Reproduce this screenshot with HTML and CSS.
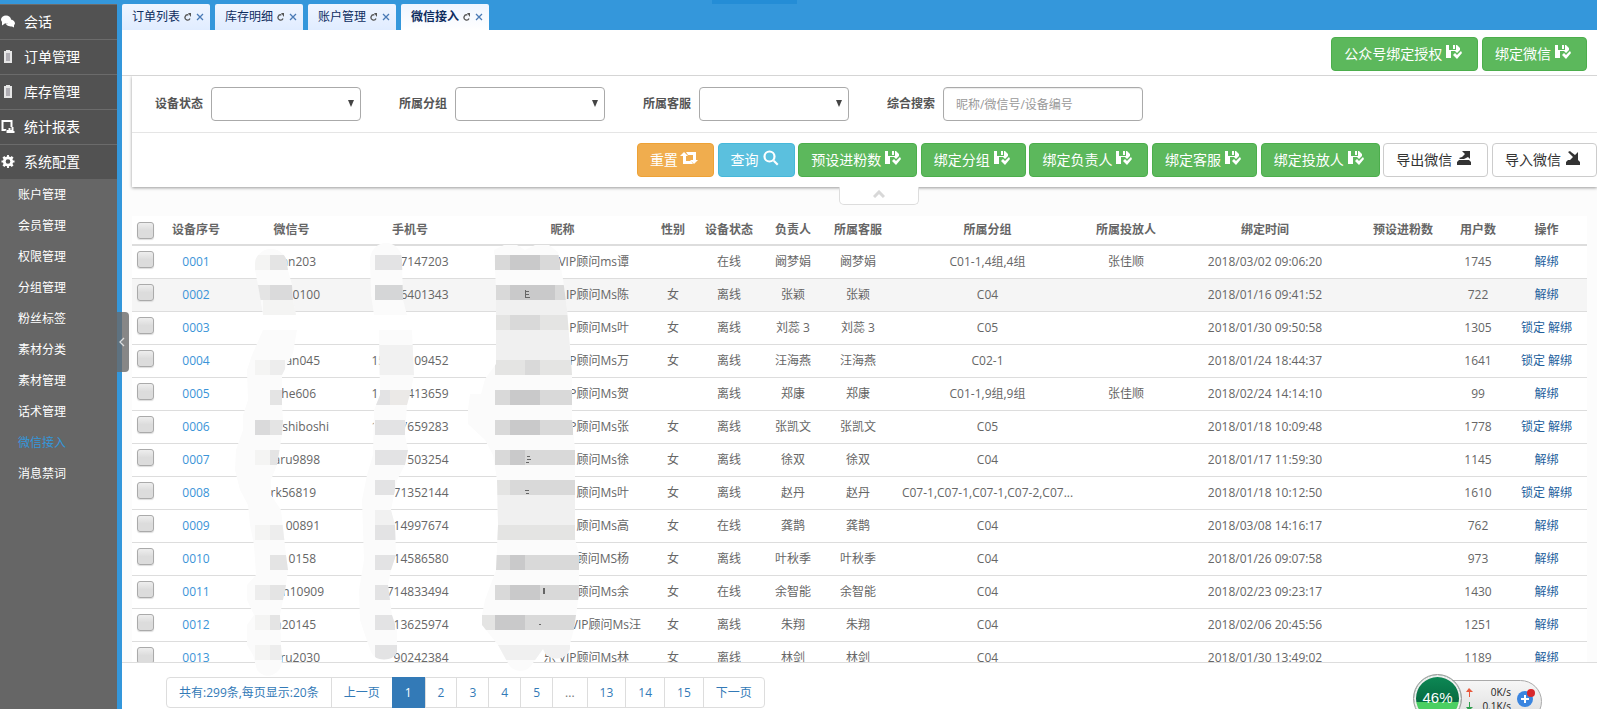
FILE: index.html
```html
<!DOCTYPE html>
<html lang="zh-CN">
<head>
<meta charset="utf-8">
<title>微信接入</title>
<link rel="stylesheet" href="styles.css">
</head>
<body>
<svg class="sprite" aria-hidden="true">
  <symbol id="i-saved" viewBox="0 0 16 16"><path d="M0 1h3v5h7V1h1l3 3v2l-3 3-2-2H5v7H0zM7 1h2v4H7zM7 11l2-2 2 2 4-4 1 2-5 6z"/></symbol>
  <symbol id="i-retweet" viewBox="0 0 18 14"><path d="M4 1l4 4H6v5h5l2 3H3V5H0zM6 1h10v8h2l-4 4-4-4h3V4H8z"/></symbol>
  <symbol id="i-search" viewBox="0 0 16 16"><circle cx="6.5" cy="6.500" r="5" fill="none" stroke="currentColor" stroke-width="2.200"/><path d="M10 11.500l1.500-1.500 4 4-1.500 1.500z"/></symbol>
  <symbol id="i-export" viewBox="0 0 16 16"><path d="M3 10h10l2 2v3H1v-3zM6 1h8v8l-2-2-4 2H4l-1-1 3-1 3-3z"/></symbol>
  <symbol id="i-import" viewBox="0 0 16 16"><path d="M3 10h10l2 2v3H1v-3zM3 2l2-1 1 1 4 3 3-3v8H5l3-3z"/></symbol>
  <symbol id="i-chat" viewBox="0 0 14 12"><ellipse cx="5" cy="4" rx="5" ry="4"/><path d="M1 6v4l3-2zM9 4c3 0 5 2 5 4l-1 2v2l-2-1c-3 0-6-1-6-3 3 0 4-2 4-4z"/></symbol>
  <symbol id="i-clip" viewBox="0 0 14 13"><path d="M5 0h4v1h2v12H3V1h2z" fill="#e6e6e6"/><path d="M5 3h4v8H5z" fill="#b0aeb4"/></symbol>
  <symbol id="i-chart" viewBox="0 0 13 13"><path d="M0 0h11v7H9V2H2v7h3l-1 2H0z"/><path d="M5 13v-3h2V8h2v2h1V7h2v4h1v2z"/></symbol>
  <symbol id="i-gear" viewBox="0 0 14 14"><circle cx="7" cy="7" r="4" fill="none" stroke="currentColor" stroke-width="3"/><path d="M6 0h2v3H6zM6 11h2v3H6zM0 6h3v2H0zM11 6h3v2h-3zM1 3l2-2 2 2-2 2zM9 3l2-2 2 2-2 2zM1 11l2-2 2 2-2 2zM9 11l2-2 2 2-2 2z"/></symbol>
  <symbol id="i-reload" viewBox="0 0 8 8"><path d="M6 5.500A2.600 2.600 0 1 1 4.500 2" fill="none" stroke="#555" stroke-width="1.300"/><path d="M4 0h3v4z" fill="#555"/></symbol>
  <symbol id="i-close" viewBox="0 0 8 8"><path d="M1 1l6 6M7 1L1 7" fill="none" stroke="#4a7ab5" stroke-width="1.300"/></symbol>
</svg>
<div class="loader"></div>

<nav class="sidebar">
  <a class="nav-main" href="#"><svg class="nav-icon"><use href="#i-chat"/></svg>会话</a>
  <a class="nav-main" href="#"><svg class="nav-icon"><use href="#i-clip"/></svg>订单管理</a>
  <a class="nav-main" href="#"><svg class="nav-icon"><use href="#i-clip"/></svg>库存管理</a>
  <a class="nav-main" href="#"><svg class="nav-icon"><use href="#i-chart"/></svg>统计报表</a>
  <a class="nav-main" href="#"><svg class="nav-icon"><use href="#i-gear"/></svg>系统配置</a>
  <a class="nav-sub" href="#">账户管理</a>
  <a class="nav-sub" href="#">会员管理</a>
  <a class="nav-sub" href="#">权限管理</a>
  <a class="nav-sub" href="#">分组管理</a>
  <a class="nav-sub" href="#">粉丝标签</a>
  <a class="nav-sub" href="#">素材分类</a>
  <a class="nav-sub" href="#">素材管理</a>
  <a class="nav-sub" href="#">话术管理</a>
  <a class="nav-sub current" href="#">微信接入</a>
  <a class="nav-sub" href="#">消息禁词</a>
</nav>
<button class="side-toggle" type="button" aria-label="收起菜单"><svg viewBox="0 0 6 10"><path d="M5 1L1 5l4 4" fill="none" stroke="#ddd" stroke-width="1.300"/></svg></button>

<div class="workspace">
  <div class="tabs">
    <a class="tab" href="#">订单列表<svg><use href="#i-reload"/></svg><svg><use href="#i-close"/></svg></a>
    <a class="tab" href="#">库存明细<svg><use href="#i-reload"/></svg><svg><use href="#i-close"/></svg></a>
    <a class="tab" href="#">账户管理<svg><use href="#i-reload"/></svg><svg><use href="#i-close"/></svg></a>
    <a class="tab active" href="#">微信接入<svg><use href="#i-reload"/></svg><svg><use href="#i-close"/></svg></a>
  </div>

  <main class="page">
    <header class="page-head">
      <button class="btn green" type="button">公众号绑定授权<svg><use href="#i-saved"/></svg></button>
      <button class="btn green" type="button">绑定微信<svg><use href="#i-saved"/></svg></button>
    </header>

    <div class="scroll">
      <form class="panel">
        <div class="filters">
          <div class="field"><label for="f1">设备状态</label><span class="pick"><select id="f1"><option></option></select></span></div>
          <div class="field"><label for="f2">所属分组</label><span class="pick"><select id="f2"><option></option></select></span></div>
          <div class="field"><label for="f3">所属客服</label><span class="pick"><select id="f3"><option></option></select></span></div>
          <div class="field"><label for="f4">综合搜索</label><input id="f4" type="text" placeholder="昵称/微信号/设备编号"></div>
        </div>
        <div class="actions">
          <button class="btn orange" type="button">重置<svg><use href="#i-retweet"/></svg></button>
          <button class="btn cyan" type="button">查询<svg><use href="#i-search"/></svg></button>
          <button class="btn green" type="button">预设进粉数<svg><use href="#i-saved"/></svg></button>
          <button class="btn green" type="button">绑定分组<svg><use href="#i-saved"/></svg></button>
          <button class="btn green" type="button">绑定负责人<svg><use href="#i-saved"/></svg></button>
          <button class="btn green" type="button">绑定客服<svg><use href="#i-saved"/></svg></button>
          <button class="btn green" type="button">绑定投放人<svg><use href="#i-saved"/></svg></button>
          <button class="btn plain" type="button">导出微信<svg><use href="#i-export"/></svg></button>
          <button class="btn plain" type="button">导入微信<svg><use href="#i-import"/></svg></button>
        </div>
        <button class="fold" type="button" aria-label="收起筛选"><svg viewBox="0 0 12 8"><path d="M1 7l5-5 5 5" fill="none" stroke="#d8d8d8" stroke-width="3"/></svg></button>
      </form>

      <table class="grid">
        <colgroup><col class="c-check"><col class="c-no"><col class="c-wx"><col class="c-tel"><col class="c-nick"><col class="c-sex"><col class="c-state"><col class="c-owner"><col class="c-service"><col class="c-group"><col class="c-put"><col class="c-time"><col class="c-preset"><col class="c-users"><col class="c-ops"></colgroup>
        <thead><tr><th><input type="checkbox" aria-label="全选"></th><th>设备序号</th><th>微信号</th><th>手机号</th><th>昵称</th><th>性别</th><th>设备状态</th><th>负责人</th><th>所属客服</th><th>所属分组</th><th>所属投放人</th><th>绑定时间</th><th>预设进粉数</th><th>用户数</th><th>操作</th></tr></thead>
        <tbody>
        <tr><td><input type="checkbox" aria-label="0001"></td><td><a href="#">0001</a></td><td><span class="wx s">nn203</span></td><td><span class="tel">7147203</span></td><td><span class="nick">VIP顾问ms谭</span></td><td></td><td>在线</td><td>阚梦娟</td><td>阚梦娟</td><td>C01-1,4组,4组</td><td>张佳顺</td><td>2018/03/02 09:06:20</td><td></td><td>1745</td><td><a class="op" href="#">解绑</a></td></tr>
        <tr class="hover"><td><input type="checkbox" aria-label="0002"></td><td><a href="#">0002</a></td><td><span class="wx m">0100</span></td><td><span class="tel">6401343</span></td><td><span class="nick">IP顾问Ms陈</span></td><td>女</td><td>离线</td><td>张颖</td><td>张颖</td><td>C04</td><td></td><td>2018/01/16 09:41:52</td><td></td><td>722</td><td><a class="op" href="#">解绑</a></td></tr>
        <tr><td><input type="checkbox" aria-label="0003"></td><td><a href="#">0003</a></td><td></td><td></td><td><span class="nick">P顾问Ms叶</span></td><td>女</td><td>离线</td><td>刘蕊 3</td><td>刘蕊 3</td><td>C05</td><td></td><td>2018/01/30 09:50:58</td><td></td><td>1305</td><td><a class="op" href="#">锁定</a> <a class="op" href="#">解绑</a></td></tr>
        <tr><td><input type="checkbox" aria-label="0004"></td><td><a href="#">0004</a></td><td><span class="wx m">an045</span></td><td><span class="tel"><span>15</span><span>09452</span></span></td><td><span class="nick">P顾问Ms万</span></td><td>女</td><td>离线</td><td>汪海燕</td><td>汪海燕</td><td>C02-1</td><td></td><td>2018/01/24 18:44:37</td><td></td><td>1641</td><td><a class="op" href="#">锁定</a> <a class="op" href="#">解绑</a></td></tr>
        <tr><td><input type="checkbox" aria-label="0005"></td><td><a href="#">0005</a></td><td><span class="wx s">he606</span></td><td><span class="tel"><span>1</span><span>413659</span></span></td><td><span class="nick">P顾问Ms贺</span></td><td></td><td>离线</td><td>郑康</td><td>郑康</td><td>C01-1,9组,9组</td><td>张佳顺</td><td>2018/02/24 14:14:10</td><td></td><td>99</td><td><a class="op" href="#">解绑</a></td></tr>
        <tr><td><input type="checkbox" aria-label="0006"></td><td><a href="#">0006</a></td><td><span class="wx xl">shiboshi</span></td><td><span class="tel"><span>1</span><span>7659283</span></span></td><td><span class="nick">P顾问Ms张</span></td><td>女</td><td>离线</td><td>张凯文</td><td>张凯文</td><td>C05</td><td></td><td>2018/01/18 10:09:48</td><td></td><td>1778</td><td><a class="op" href="#">锁定</a> <a class="op" href="#">解绑</a></td></tr>
        <tr><td><input type="checkbox" aria-label="0007"></td><td><a href="#">0007</a></td><td><span class="wx m">aru9898</span></td><td><span class="tel">503254</span></td><td><span class="nick">顾问Ms徐</span></td><td>女</td><td>离线</td><td>徐双</td><td>徐双</td><td>C04</td><td></td><td>2018/01/17 11:59:30</td><td></td><td>1145</td><td><a class="op" href="#">解绑</a></td></tr>
        <tr><td><input type="checkbox" aria-label="0008"></td><td><a href="#">0008</a></td><td><span class="wx s">rk56819</span></td><td><span class="tel">71352144</span></td><td><span class="nick">顾问Ms叶</span></td><td>女</td><td>离线</td><td>赵丹</td><td>赵丹</td><td>C07-1,C07-1,C07-1,C07-2,C07...</td><td></td><td>2018/01/18 10:12:50</td><td></td><td>1610</td><td><a class="op" href="#">锁定</a> <a class="op" href="#">解绑</a></td></tr>
        <tr><td><input type="checkbox" aria-label="0009"></td><td><a href="#">0009</a></td><td><span class="wx m">00891</span></td><td><span class="tel">14997674</span></td><td><span class="nick">顾问Ms高</span></td><td>女</td><td>在线</td><td>龚鹊</td><td>龚鹊</td><td>C04</td><td></td><td>2018/03/08 14:16:17</td><td></td><td>762</td><td><a class="op" href="#">解绑</a></td></tr>
        <tr><td><input type="checkbox" aria-label="0010"></td><td><a href="#">0010</a></td><td><span class="wx s">0158</span></td><td><span class="tel">14586580</span></td><td><span class="nick">顾问MS杨</span></td><td>女</td><td>离线</td><td>叶秋季</td><td>叶秋季</td><td>C04</td><td></td><td>2018/01/26 09:07:58</td><td></td><td>973</td><td><a class="op" href="#">解绑</a></td></tr>
        <tr><td><input type="checkbox" aria-label="0011"></td><td><a href="#">0011</a></td><td><span class="wx l">n10909</span></td><td><span class="tel">714833494</span></td><td><span class="nick">顾问Ms余</span></td><td>女</td><td>在线</td><td>余智能</td><td>余智能</td><td>C04</td><td></td><td>2018/02/23 09:23:17</td><td></td><td>1430</td><td><a class="op" href="#">解绑</a></td></tr>
        <tr><td><input type="checkbox" aria-label="0012"></td><td><a href="#">0012</a></td><td><span class="wx s">n20145</span></td><td><span class="tel">13625974</span></td><td><span class="nick wide">VIP顾问Ms汪</span></td><td>女</td><td>离线</td><td>朱翔</td><td>朱翔</td><td>C04</td><td></td><td>2018/02/06 20:45:56</td><td></td><td>1251</td><td><a class="op" href="#">解绑</a></td></tr>
        <tr><td><input type="checkbox" aria-label="0013"></td><td><a href="#">0013</a></td><td><span class="wx m">ru2030</span></td><td><span class="tel">90242384</span></td><td><span class="nick">乐 VIP顾问Ms林</span></td><td>女</td><td>离线</td><td>林剑</td><td>林剑</td><td>C04</td><td></td><td>2018/01/30 13:49:02</td><td></td><td>1189</td><td><a class="op" href="#">解绑</a></td></tr>
        </tbody>
      </table>
    </div>

    <footer class="page-foot">
      <ul class="pager">
        <li><a href="#">共有:299条,每页显示:20条</a></li><li><a href="#">上一页</a></li><li><a class="on" href="#">1</a></li><li><a href="#">2</a></li><li><a href="#">3</a></li><li><a href="#">4</a></li><li><a href="#">5</a></li><li><a class="dots" href="#">...</a></li><li><a href="#">13</a></li><li><a href="#">14</a></li><li><a href="#">15</a></li><li><a href="#">下一页</a></li>
      </ul>
    </footer>

    <!-- privacy mosaic over account, phone and nickname columns -->
    <svg class="mosaic" viewBox="235 240 350 440" shape-rendering="crispEdges" aria-hidden="true">
      <clipPath id="m1"><path d="M255 264a16 15 0 0 1 32 0l1 6 4 15 1 15 3 15h-33l-4-24-4-21zM263 330h34l-4 23-11 22v30l1 15-1 15-5 30-6 15v15l10 15 5 45 2 15-2 15-3 15-3 15 1 30 1 15a14 15 0 0 1-25 10l-4-15-6-10v-20l7-10-7-15v-15l9-10-2-30-4-20-2-20-8-15-5-20 1-20 7-20v-15l5-15-1-30 5-15z"/></clipPath>
      <g clip-path="url(#m1)"><path fill="#fbfbfb" d="M235 240h65v75h-65zM235 330h65v350h-65z"/>
        <path fill="#f4f4f3" d="M255 255h15v15h-15zM263 300h35v15h-35zM255 360h15v15h-15zM255 450h15v15h-15zM255 525h15v15h-15zM255 615h15v15h-15zM255 645h15v15h-15z"/>
        <path fill="#e4e4e4" d="M270 255h20v15h-20zM255 285h15v15h-15zM270 390h15v15h-15zM270 420h15v15h-15zM270 450h15v15h-15zM270 555h20v15h-20zM270 585h20v15h-20zM270 615h15v15h-15z"/>
        <path fill="#ededed" d="M270 360h15v15h-15zM270 525h15v15h-15zM255 585h15v15h-15zM270 645h15v15h-15z"/>
        <path fill="#dadadb" d="M270 285h25v15h-25zM255 420h15v15h-15z"/></g>
      <clipPath id="m2"><path d="M370 260a16 17 0 0 1 32 0l1 40 4 15h-33l-3-20zM379 330h33l2 45-3 15-4 15-2 30 3 15-3 15-8 15-6 30 4 15 1 30-5 15-3 15 2 15 2 15 5 15v22a14 12 0 0 1-26 0l-6-17-5-15-1-30 5-30-2-60 5-25 6-20 1-45 6-15z"/></clipPath>
      <g clip-path="url(#m2)"><path fill="#fbfbfb" d="M350 240h65v75h-65zM350 330h65v350h-65z"/>
        <path fill="#f1f1f1" d="M375 345h40v30h-40zM375 510h20v15h-20z"/>
        <path fill="#e3e3e4" d="M375 255h30v15h-30zM375 390h15v15h-15zM375 420h30v15h-30zM375 450h35v15h-35zM375 480h20v15h-20zM375 525h22v15h-22zM375 555h20v15h-20zM375 585h20v15h-20zM375 615h20v15h-20zM375 645h25v15h-25z"/>
        <path fill="#ebe9e7" d="M390 390h25v15h-25z"/><path fill="#d5d6d7" d="M375 285h30v15h-30z"/></g>
      <clipPath id="m3"><path d="M494 250l10-5h13l8 5 10-5h14l9 7 5 27 4 30 5 65v45l3 30v90l4 15v40l-5 35-4 15v5a14 13 0 0 1-27 0l-10 14a14 14 0 0 1-24 2l-11-20-16-20v-10l3-15 11-30 2-45-1-45-4-25-8-15-17-16v-15l2-15h11l4-15 11-15v-75z"/></clipPath>
      <g clip-path="url(#m3)"><path fill="#fbfbfb" d="M465 240h120v440H465z"/>
        <path fill="#f0f0f0" d="M495 300h78v15h-78zM495 330h78v30h-78zM495 495h84v30h-84zM495 645h84v15h-84z"/>
        <path fill="#e4e4e3" d="M495 315h78v15h-78zM495 360h78v15h-78zM495 480h15v15h-15zM495 525h84v15h-84zM480 615h15v15h-15z"/>
        <path fill="#d9d9d9" d="M495 255h65v15h-65zM495 285h75v15h-75zM510 315h30v15h-30zM525 360h15v15h-15zM495 390h78v15h-78zM495 420h78v15h-78zM495 450h84v15h-84zM510 480h70v15h-70zM495 555h84v15h-84zM495 585h84v15h-84zM495 615h84v15h-84z"/>
        <path fill="#c9c9ca" d="M510 255h30v15h-30zM510 285h45v15h-45zM510 390h30v15h-30zM510 420h30v15h-30zM510 450h15v15h-15zM510 555h15v15h-15zM510 585h30v15h-30zM495 615h30v15h-30z"/></g>
      <path fill="#666" d="M525 290h1v8h-1zM526 291h3v1h-3zM526 294h3v1h-3zM526 297h4v1h-4zM527 456h3v1h-3zM527 459h4v1h-4zM526 462h3v1h-3zM525 490h4v1h-4zM526 493h3v1h-3zM543 588h2v6h-2zM539 624h2v1h-2z"/>
    </svg>
  </main>
</div>

<aside class="meter">
  <div class="speed">
    <svg viewBox="0 0 7 9"><path d="M3 0l4 4H4v5H3V4H0z" fill="#e8583c"/></svg><span>0K/s</span>
    <svg viewBox="0 0 7 9"><path d="M3 9l4-4H4V0H3v5H0z" fill="#2f9e4d"/></svg><span>0.1K/s</span>
  </div>
  <svg class="plus" viewBox="0 0 20 20"><circle cx="9" cy="11" r="8" fill="#3a85e0"/><path d="M9 7v8M5 11h8" stroke="#fff" stroke-width="2"/><circle cx="15" cy="5" r="4" fill="#d8282c"/></svg>
  <div class="ball">46%</div>
</aside>
</body>
</html>
```
FILE: styles.css
```css
* { box-sizing: border-box; }
body {
  margin: 0;
  height: 100vh;
  display: flex;
  overflow: hidden;
  position: relative;
  background: #3497db;
  color: #666;
  font: 12px/18px "Open Sans", "Noto Sans CJK SC", sans-serif;
}
a { text-decoration: none; color: #3a94d8; }
button, input, select { font: inherit; }
svg { fill: currentColor; flex: none; }
.sprite { position: absolute; width: 0; height: 0; }
.loader { position: absolute; top: 0; left: 712px; width: 85px; height: 4px; background: #248dd6; }

/* sidebar */
.sidebar { flex: none; width: 117px; margin-top: 4px; background: #666; }
.nav-main {
  display: flex; align-items: center; gap: 9px;
  height: 35px; padding: 0 1px;
  border-top: 1px solid #6b6b6b;
  background: #525252; color: #fff;
  font-size: 14px;
}
.nav-icon { width: 14px; height: 13px; margin-bottom: 2px; }
.nav-sub { display: block; height: 31px; padding-left: 18px; line-height: 31px; color: #fff; }
.nav-sub.current { color: #3497db; }
.side-toggle {
  position: absolute; left: 117px; top: 312px; z-index: 2;
  width: 12px; height: 60px; padding: 0;
  border: 0; border-radius: 0 4px 4px 0;
  background: rgba(105, 105, 105, 0.8);
}
.side-toggle svg { width: 6px; height: 10px; display: block; margin-left: 2px; }

/* tabs */
.workspace { flex: 1; min-width: 0; margin-left: 5px; display: flex; flex-direction: column; }
.tabs { display: flex; gap: 5px; padding-top: 4px; }
.tab {
  display: flex; align-items: center; gap: 4px;
  width: 88px; height: 26px; padding-left: 10px;
  border-radius: 2px 2px 0 0;
  background: linear-gradient(#eff5ff, #e0ecff);
  color: #0e2d5f;
}
.tab svg { width: 8px; height: 8px; }
.tab.active { background: linear-gradient(#eff5ff, #fff); font-weight: bold; }

/* page */
.page { flex: 1; min-height: 0; position: relative; display: flex; flex-direction: column; background: #fcfcfc; }
.page-head {
  height: 46px; padding: 7px 10px 0 0;
  border-bottom: 1px solid #d5d5d5;
  background: #fff; text-align: right; font-size: 14px;
}
.scroll { flex: 1; min-height: 0; overflow: hidden; padding-left: 10px; }
.panel { position: relative; background: #fff; box-shadow: 0 1px 3px #999; }
.filters { display: flex; gap: 38px; height: 57px; padding: 11px 0 0 23px; border-bottom: 1px solid #e5e5e5; }
.field { display: flex; align-items: center; gap: 8px; height: 34px; }
.field label { font-weight: bold; color: #555; }
.field select, .field input {
  height: 34px; border: 1px solid #aaa; border-radius: 4px;
  background: #fff; color: #555;
}
.field select { width: 150px; appearance: none; display: block; }
.field input { width: 200px; padding: 0 12px; box-shadow: inset 0 1px 1px rgba(0, 0, 0, 0.08); }
.field input::placeholder { color: #999; }
.pick { position: relative; }
.pick::after {
  content: ""; position: absolute; right: 7px; top: 13px;
  border: 3px solid transparent; border-top: 7px solid #444; border-bottom: 0;
  pointer-events: none;
}
.actions { padding: 10px 0; text-align: right; font-size: 14px; height: 54px; white-space: nowrap; }
.btn {
  display: inline-flex; align-items: center; gap: 4px; vertical-align: top;
  height: 34px; padding: 0 15px 0 12px;
  border: 1px solid; border-radius: 4px;
  color: #fff; white-space: nowrap;
}
.btn svg { width: 16px; height: 16px; margin-bottom: 4px; }
.green { background: #5cb85c; border-color: #4cae4c; }
.orange { gap: 2px; background: #f0ad4e; border-color: #eea236; }
.orange svg { width: 18px; }
.cyan { background: #5bc0de; border-color: #46b8da; }
.plain { background: #fff; border-color: #ccc; color: #333; }
.fold {
  position: absolute; top: 100%; left: 51%; transform: translateX(-50%);
  width: 80px; height: 18px; padding: 0;
  border: 1px solid #ddd; border-top: 0; border-radius: 0 0 5px 5px;
  background: #fff;
}
.fold svg { display: block; width: 12px; height: 8px; margin: 0 auto 3px; }

/* data table */
.grid {
  width: calc(100% - 10px); margin-top: 29px;
  table-layout: fixed; border-collapse: collapse;
  background: #fff; text-align: center;
}
.c-check { width: 27px; } .c-no { width: 74px; } .c-wx { width: 117px; }
.c-tel { width: 120px; } .c-nick { width: 185px; } .c-sex { width: 36px; }
.c-state { width: 76px; } .c-owner { width: 52px; } .c-service { width: 78px; }
.c-group { width: 181px; } .c-put { width: 96px; } .c-time { width: 182px; }
.c-preset { width: 94px; } .c-users { width: 56px; } .c-ops { width: 81px; }
.grid th, .grid td { padding: 0; white-space: nowrap; }
.grid th { height: 29px; border-bottom: 2px solid #ddd; }
.grid td { height: 33px; border-bottom: 1px solid #ddd; }
.grid .hover { background: #f5f5f5; }
.grid input {
  appearance: none; display: block;
  width: 17px; height: 17px; margin: 0 0 5px 5px;
  border: 1px solid #aaa; border-radius: 3px;
  background: linear-gradient(#eee, #dcdcdc 50%);
  box-shadow: 0 1px 1px #ddd;
}
.grid th input { margin-bottom: 0; }
.grid .op { color: #23609c; }
.wx, .tel, .nick { display: inline-flex; justify-content: flex-end; }
.wx.s { width: 49px; } .wx.m { width: 57px; } .wx.l { width: 65px; } .wx.xl { width: 75px; }
.tel { width: 77px; }
.tel span:first-child { flex: 1; text-align: left; }
.nick { width: 133px; }
.nick.wide { width: 157px; }
.mosaic { position: absolute; left: 113px; top: 210px; width: 350px; height: 440px; pointer-events: none; }

/* pager */
.page-foot { height: 47px; padding: 14px 0 0 44px; border-top: 1px solid #ddd; background: #fff; }
.pager { display: inline-flex; margin: 0; padding: 0; list-style: none; border: 1px solid #ddd; border-radius: 4px; }
.pager li + li { border-left: 1px solid #ddd; }
.pager a { display: block; padding: 6px 12px; line-height: 17px; color: #337ab7; }
.pager .on { background: #337ab7; color: #fff; margin: -1px 0 -1px -1px; padding: 7px 13px 7px 13px; }
.pager .dots { color: #777; }

/* network meter */
.meter { position: absolute; right: 55px; bottom: -14px; width: 129px; height: 49px; }
.speed {
  display: grid; grid-template-columns: 8px 1fr; row-gap: 2px; align-items: center; align-content: start;
  height: 43px; margin: 6px 0 0 28px; padding: 5px 30px 0 24px;
  border: 1px solid #aaa; border-radius: 0 22px 22px 0;
  background: linear-gradient(#f6f6f6, #dcdcdc);
  color: #222; font: 10px/12px "Open Sans", sans-serif; text-align: right;
}
.speed svg { width: 7px; height: 9px; }
.plus { position: absolute; right: 6px; top: 14px; width: 20px; height: 20px; }
.ball {
  position: absolute; left: 0; top: 0; width: 49px; height: 49px;
  border: 1px solid #999; border-radius: 50%;
  background: linear-gradient(#0e8a56, #066b41 27px, #4bcf62 27px) padding-box;
  box-shadow: inset 0 0 0 2px #eee;
  color: #fff; font: 15px/46px "Liberation Sans", sans-serif; text-align: center;
}
```
